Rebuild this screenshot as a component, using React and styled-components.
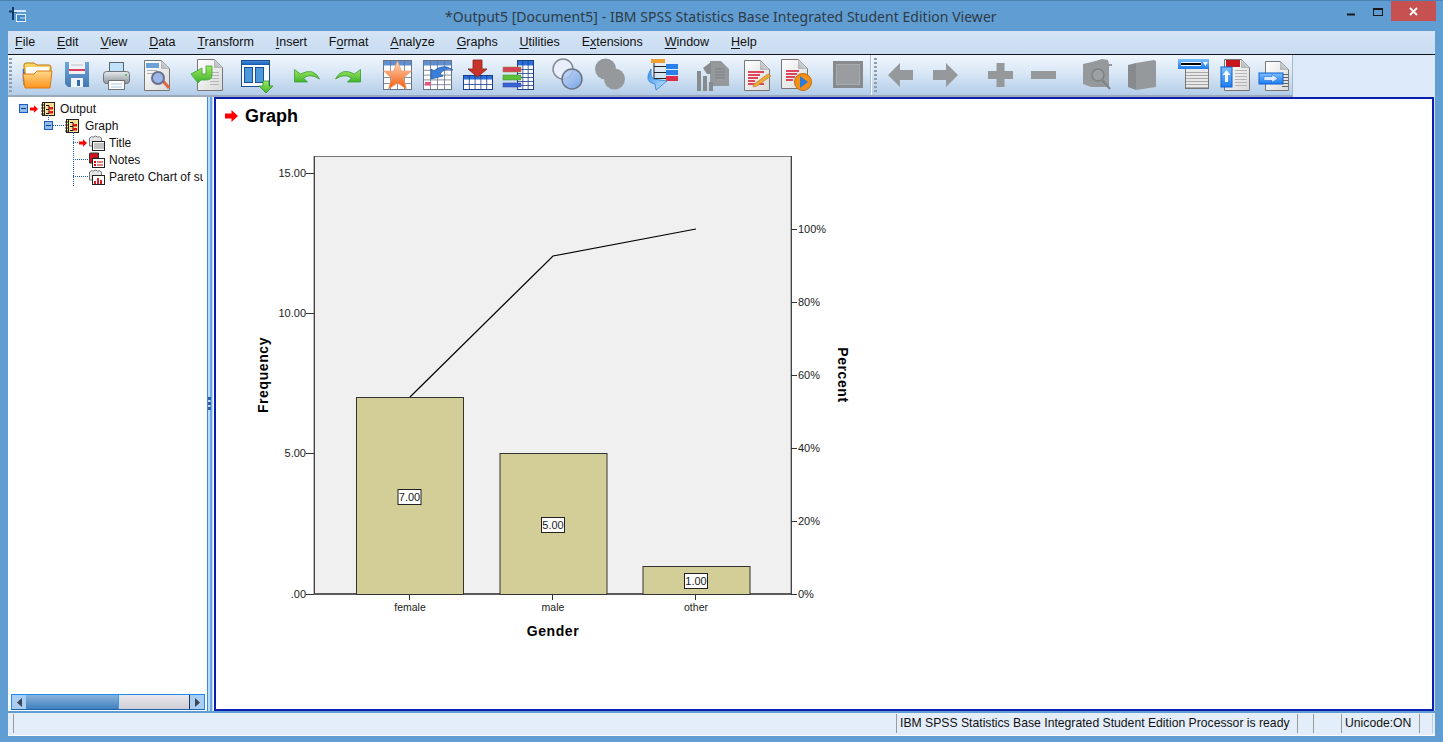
import React from "react";
import styled, { createGlobalStyle } from "styled-components";

const GlobalStyle = createGlobalStyle`
  html, body { margin: 0; padding: 0; overflow: hidden; }
  body { font-family: "Liberation Sans", Arial, sans-serif; }
`;

const Win = styled.div`
  width: 1443px;
  height: 742px;
  box-sizing: border-box;
  background: #5f9dd2;
  border-top: 1px solid #4a82b2;
  display: flex;
  flex-direction: column;
  position: relative;
`;

const TitleBar = styled.div`
  height: 30px;
  flex: none;
  display: flex;
  align-items: center;
  padding-left: 9px;
  position: relative;
`;

const Title = styled.div`
  position: absolute;
  left: 445px;
  top: 6px;
  font-family: "Noto Sans", "Liberation Sans", sans-serif;
  font-size: 14px;
  letter-spacing: 0.035px;
  line-height: 19px;
  color: #2f3b46;
  white-space: nowrap;
`;

const WinControls = styled.div`
  position: absolute;
  right: 7px;
  top: 0;
  height: 20px;
  display: flex;
  align-items: flex-start;
`;

const CtlButton = styled.div`
  width: ${(p) => p.$w}px;
  height: 20px;
  display: flex;
  align-items: center;
  justify-content: center;
  padding-top: ${(p) => p.$drop || 0}px;
  box-sizing: border-box;
  background: ${(p) => (p.$close ? "#c75050" : "transparent")};
`;

const Body = styled.div`
  flex: 1;
  display: flex;
  flex-direction: column;
  margin: 0 8px;
  padding-bottom: 6px;
  min-height: 0;
`;

const MenuBar = styled.div`
  height: 24px;
  flex: none;
  display: flex;
  align-items: center;
  gap: 21.85px;
  padding: 0 0 1px 7px;
  box-sizing: border-box;
  background: linear-gradient(#d5e4f6, #c9dcf1);
  border-bottom: 1px solid #10151a;
  font-size: 12.5px;
  color: #111;
`;

const MenuItem = styled.span`
  u { text-underline-offset: 2px; }
`;

const ToolRow = styled.div`
  height: 42px;
  flex: none;
  display: flex;
  background: #dce9f8;
`;

const ToolBar = styled.div`
  width: 1285px;
  height: 42px;
  box-sizing: border-box;
  display: flex;
  align-items: center;
  position: relative;
  background: linear-gradient(#f0f6fd, #d9e7f6 45%, #b3cde8);
  border-bottom: 2px solid #9aaaba;
  border-right: 1px solid #a8b8c8;
`;

const Grip = styled.div`
  width: 3px;
  height: 34px;
  flex: none;
  margin-left: ${(p) => p.$left}px;
  background: repeating-linear-gradient(#8f9fb0 0 2px, transparent 2px 4px);
`;

const Divider = styled.div`
  width: 1px;
  height: 40px;
  flex: none;
  margin-left: 8px;
  background: #f4f8fc;
  box-shadow: -1px 0 0 #aebfd0;
`;

const Tool = styled.svg`
  flex: none;
  margin-left: ${(p) => p.$gap}px;
  overflow: visible;
`;

const Panes = styled.div`
  flex: 1;
  display: flex;
  min-height: 0;
  background: #cfe0f3;
`;

const TreePane = styled.div`
  width: 199px;
  flex: none;
  box-sizing: border-box;
  background: #fff;
  display: flex;
  flex-direction: column;
  padding-top: 3px;
  position: relative;
`;

const TreeBody = styled.div`
  flex: 1;
  width: 195px;
  overflow: hidden;
`;

const TreeRow = styled.div`
  height: 17px;
  display: flex;
  align-items: center;
  padding-left: ${(p) => p.$indent}px;
  font-size: 12px;
  color: #111;
  white-space: nowrap;
  position: relative;
`;

const Link = styled.i`
  position: absolute;
  left: ${(p) => p.$x}px;
  top: ${(p) => p.$y}px;
  width: ${(p) => p.$w || 0}px;
  height: ${(p) => p.$h || 0}px;
  border-top: ${(p) => (p.$w ? "1px dotted #1f5fc0" : "none")};
  border-left: ${(p) => (p.$h ? "1px dotted #1f5fc0" : "none")};
`;

const NodeIcon = styled.svg`
  flex: none;
  margin-left: ${(p) => p.$gap || 0}px;
`;

const NodeLabel = styled.span`
  margin-left: ${(p) => p.$gap}px;
`;

const HScroll = styled.div`
  height: 16px;
  flex: none;
  margin: 0 2px 1px 3px;
  display: flex;
  box-sizing: border-box;
  border: 1px solid #1f8cf0;
  border-bottom-color: #1e63a8;
`;

const ScrollBtn = styled.div`
  width: 14px;
  flex: none;
  background: #a9cdf3;
  display: flex;
  align-items: center;
  justify-content: center;
`;

const ScrollThumb = styled.div`
  width: 92px;
  flex: none;
  background: linear-gradient(#8ab4db, #3f7fbd);
  border-right: 1px solid #3a9cf5;
`;

const ScrollTrack = styled.div`
  flex: 1;
  background: linear-gradient(#e9e7ec, #cfcdd6);
  border-right: 1px solid #20364f;
`;

const Splitter = styled.div`
  width: 7px;
  flex: none;
  background: linear-gradient(90deg, #3d8ad8 0 1px, #bcdcf8 1px 3px, #6aa8e4 3px 5px, #bcdcf8 5px 6px, #fff 6px);
  display: flex;
  flex-direction: column;
  align-items: center;
  justify-content: center;
  gap: 2px;
  padding-bottom: 1px;
  i {
    width: 3px;
    height: 3px;
    background: #2f5ea8;
    margin-right: 2px;
  }
`;

const Viewer = styled.div`
  flex: 1;
  background: #fff;
  border: 2px solid #0a1fb0;
  min-width: 0;
  overflow: hidden;
  margin-right: 1px;
`;

const GraphHead = styled.div`
  display: flex;
  align-items: center;
  gap: 7px;
  height: 22px;
  margin: 6px 0 0 9px;
  font-size: 18px;
  font-weight: 700;
  color: #000;
`;

const ChartSvg = styled.svg`
  display: block;
  margin: 13px 0 0 14px;
  font-family: "Liberation Sans", Arial, sans-serif;
`;

const StatusBar = styled.div`
  height: 23px;
  flex: none;
  margin-top: 2px;
  box-sizing: border-box;
  display: flex;
  padding: 1px 2px 2px 5px;
  background: #e4eefa;
  border-bottom: 1px solid #fff;
  font-size: 12.2px;
  color: #111;
`;

const StatusCell = styled.div`
  width: ${(p) => p.$w}px;
  flex: ${(p) => (p.$grow ? 1 : "none")};
  box-sizing: border-box;
  border-left: 1px solid #9c9c9c;
  padding-left: 3px;
  line-height: 19px;
  white-space: nowrap;
  overflow: hidden;
  &:last-child {
    border-right: 1px solid #c4ccd6;
  }
`;

const Label = styled.text`
  font-size: ${(p) => p.$size || 11}px;
  font-weight: ${(p) => (p.$bold ? 700 : 400)};
  letter-spacing: ${(p) => (p.$bold ? 0.6 : 0)}px;
  fill: ${(p) => (p.$bold ? "#000" : "#1c1c1c")};
`;

function Defs() {
  return (
    <svg width="0" height="0" style={{ position: "absolute" }}>
      <defs>
        <linearGradient id="gOrange" x1="0" y1="0" x2="0" y2="1">
          <stop offset="0" stopColor="#ffd98a" />
          <stop offset="1" stopColor="#fb9420" />
        </linearGradient>
        <linearGradient id="gYellow" x1="0" y1="0" x2="0" y2="1">
          <stop offset="0" stopColor="#ffd868" />
          <stop offset="1" stopColor="#eda52a" />
        </linearGradient>
        <linearGradient id="gFloppy" x1="0" y1="0" x2="0" y2="1">
          <stop offset="0" stopColor="#6ea6db" />
          <stop offset="1" stopColor="#4479b0" />
        </linearGradient>
        <linearGradient id="gPage" x1="0" y1="0" x2="1" y2="1">
          <stop offset="0" stopColor="#ffffff" />
          <stop offset="1" stopColor="#d9d9d9" />
        </linearGradient>
        <linearGradient id="gFold" x1="0" y1="1" x2="1" y2="0">
          <stop offset="0" stopColor="#aeb2b6" />
          <stop offset="1" stopColor="#f4f4f4" />
        </linearGradient>
        <linearGradient id="gGrey" x1="0" y1="0" x2="0" y2="1">
          <stop offset="0" stopColor="#e8ebee" />
          <stop offset="1" stopColor="#8d9398" />
        </linearGradient>
        <linearGradient id="gGreen" x1="0" y1="0" x2="0" y2="1">
          <stop offset="0" stopColor="#9fe85c" />
          <stop offset="1" stopColor="#3fb52c" />
        </linearGradient>
        <linearGradient id="gStar" x1="0" y1="0" x2="0" y2="1">
          <stop offset="0" stopColor="#ffd9bd" />
          <stop offset="1" stopColor="#f55a0c" />
        </linearGradient>
        <linearGradient id="gHead" x1="0" y1="0" x2="0" y2="1">
          <stop offset="0" stopColor="#3f8ee0" />
          <stop offset="1" stopColor="#1458ac" />
        </linearGradient>
        <linearGradient id="gVenn" x1="0" y1="0" x2="1" y2="1">
          <stop offset="0" stopColor="#c5d8f6" />
          <stop offset="1" stopColor="#6b9be6" />
        </linearGradient>
        <linearGradient id="gBlueBtn" x1="0" y1="0" x2="0" y2="1">
          <stop offset="0" stopColor="#7cc0ff" />
          <stop offset="1" stopColor="#1d7cf0" />
        </linearGradient>
        <linearGradient id="gSwirl" x1="0" y1="0" x2="1" y2="1">
          <stop offset="0" stopColor="#2f90f0" />
          <stop offset="1" stopColor="#cfe6fb" />
        </linearGradient>
      </defs>
    </svg>
  );
}

// little table used by the three data editor buttons
function Grid({ x, y, w, h, cols, rows, head = 5, line = "#555d7a", fill = "#fff", top = "#5f8fd0" }) {
  const cells = [];
  for (let i = 1; i < cols; i++) {
    const cx = x + (w * i) / cols;
    cells.push(<line key={"c" + i} x1={cx} y1={y} x2={cx} y2={y + h} stroke={line} strokeWidth="0.8" />);
  }
  for (let i = 1; i < rows; i++) {
    const cy = y + head + ((h - head) * i) / rows;
    cells.push(<line key={"r" + i} x1={x} y1={cy} x2={x + w} y2={cy} stroke={line} strokeWidth="0.8" />);
  }
  return (
    <g>
      <rect x={x} y={y} width={w} height={h} fill={fill} />
      <rect x={x} y={y} width={w} height={head} fill={top} />
      {cells}
      <rect x={x} y={y} width={w} height={h} fill="none" stroke={line} />
    </g>
  );
}

const PageLines = ({ x, y, w, n, color = "#8a8a8a", step = 3 }) => (
  <g stroke={color}>
    {Array.from({ length: n }, (_, i) => (
      <line key={i} x1={x} x2={x + w} y1={y + i * step + 0.5} y2={y + i * step + 0.5} />
    ))}
  </g>
);

// sheet with a folded top right corner
const Sheet = ({ x, y, w, h, fold = 8 }) => (
  <g>
    <path
      d={`M${x + 0.5} ${y + 0.5}h${w - fold}l${fold} ${fold}v${h - fold}h-${w}z`}
      fill="url(#gPage)"
      stroke="#777"
    />
    <path d={`M${x + w - fold + 0.5} ${y + 0.5}v${fold}h${fold}z`} fill="url(#gFold)" stroke="#9a9a9a" strokeWidth="0.5" />
  </g>
);

const GREY = "#96999c";
const GREY_DARK = "#888b8e";

const TOOLS_LEFT = [
  {
    w: 32, gap: 9,
    draw: (
      <>
        <path d="M3 27V7q0-2 2-2h8l3 2h12q2 0 2 2v6H3z" fill="url(#gYellow)" stroke="#b67b14" />
        <rect x="5" y="9" width="23" height="7" fill="#fff" />
        <path d="M2.500 11v12" stroke="#3a6fd2" strokeWidth="1.500" />
        <path d="M2 16h11l3-3h15l-2 17H4z" fill="url(#gOrange)" stroke="#d97a12" />
      </>
    ),
  },
  {
    w: 26, gap: 11,
    draw: (
      <>
        <path d="M1 4h24v25H4l-3-3z" fill="url(#gFloppy)" />
        <rect x="5" y="4" width="16" height="12" fill="#f0f2f5" />
        <path d="M7 7h12" stroke="#b9c2cc" />
        <rect x="5" y="11" width="16" height="2" fill="#dd3f5f" />
        <rect x="7" y="20" width="12" height="9" fill="#f0f4f8" />
        <rect x="13" y="22" width="3" height="6" fill="#2f6ca8" />
      </>
    ),
  },
  {
    w: 27, gap: 13,
    draw: (
      <>
        <rect x="6.500" y="4.500" width="14" height="10" fill="#bfe2fa" stroke="#5c6670" />
        <rect x="0.500" y="13.500" width="26" height="12" rx="3" fill="url(#gGrey)" stroke="#6d7378" />
        <circle cx="23" cy="17" r="1" fill="#3fb54a" />
        <rect x="5.500" y="22.500" width="16" height="9" fill="#fff" stroke="#6d7378" />
        <path d="M8 26h11M8 29h11" stroke="#a8c8e8" />
      </>
    ),
  },
  {
    w: 28, gap: 13,
    draw: (
      <>
        <Sheet x={1} y={2} w={25} h={30} />
        <rect x="3" y="5" width="13" height="5" fill="#6ea0d8" />
        <PageLines x={4} y={12} w={10} n={2} color="#b0b0b0" />
        <path d="M20 23l6 7" stroke="#e2653c" strokeWidth="3" />
        <circle cx="15" cy="20" r="6" fill="#9db6ea" stroke="#68708a" strokeWidth="2" />
      </>
    ),
  },
  {
    w: 32, gap: 20,
    draw: (
      <>
        <Sheet x={6} y={1} w={25} h={31} />
        <PageLines x={19} y={14} w={9} n={5} color="#b5b5b5" />
        <path d="M0 16l11-6 0 6h4V8h6v9q0 5-6 5h-5l-3 3z" fill="url(#gGreen)" stroke="#3c9e3c" strokeWidth="0.800" />
      </>
    ),
  },
  {
    w: 32, gap: 18,
    draw: (
      <>
        <rect x="0.500" y="2.500" width="28" height="26" fill="#f8fbff" stroke="#1f4e8c" />
        <rect x="1" y="3" width="27" height="4" fill="url(#gHead)" />
        <rect x="3.500" y="9.500" width="8" height="15" fill="#4b9ade" stroke="#1f4e8c" />
        <rect x="14.500" y="9.500" width="8" height="15" fill="#4b9ade" stroke="#1f4e8c" />
        <path d="M22 23h6v5h4l-7 7-7-7h4z" fill="url(#gGreen)" stroke="#2f8f2f" strokeWidth="0.800" />
      </>
    ),
  },
  {
    w: 26, gap: 21,
    draw: (
      <path d="M0.500 11.500v12.500h13l-4-4q7-5 16 1-6-12-19-5z" fill="url(#gGreen)" stroke="#3a9a30" strokeWidth="0.800" />
    ),
  },
  {
    w: 27, gap: 14,
    draw: (
      <path d="M26.500 11.500v12.500h-13l4-4q-7-5-16 1 6-12 19-5z" fill="url(#gGreen)" stroke="#3a9a30" strokeWidth="0.800" />
    ),
  },
  {
    w: 29, gap: 22,
    draw: (
      <>
        <Grid x={0.5} y={2.5} w={28} h={29} cols={4} rows={4} line="#6a7288" />
        <path d="M14.500 3l4 10h10l-8 7 3 11-9-6-9 6 3-11-8-7h10z" fill="url(#gStar)" stroke="#e8a070" strokeWidth="0.700" />
      </>
    ),
  },
  {
    w: 31, gap: 11,
    draw: (
      <>
        <Grid x={0.5} y={2.5} w={28} h={29} cols={4} rows={5} line="#6a7288" />
        <rect x="2" y="24" width="6" height="3.500" fill="#e8557a" />
        <path d="M8 21v-10l3 2q5-5 13-4l6 3q-8-3-13 4l3 2z" fill="#3a7fd8" stroke="#2560b0" strokeWidth="0.800" />
      </>
    ),
  },
  {
    w: 30, gap: 9,
    draw: (
      <>
        <Grid x={0.5} y={17.5} w={29} h={14} cols={5} rows={2} head={4} line="#1a3e8a" top="#2a70d8" />
        <path d="M10 2h9v9h5l-9.500 8L5 11h5z" fill="#c8342a" stroke="#8a1f1a" strokeWidth="0.800" />
      </>
    ),
  },
  {
    w: 32, gap: 9,
    draw: (
      <>
        <Grid x={15.5} y={2.5} w={16} h={29} cols={3} rows={6} head={5} line="#1a3e8a" top="#2a70d8" />
        <rect x="1" y="9" width="18" height="5" fill="#d8405a" stroke="#88902a" strokeWidth="0.500" />
        <rect x="1" y="17" width="18" height="5" fill="#5cc03a" stroke="#3a8a2a" strokeWidth="0.500" />
        <rect x="1" y="25" width="18" height="4" fill="#3a62d8" stroke="#28409a" strokeWidth="0.500" />
      </>
    ),
  },
  {
    w: 31, gap: 18,
    draw: (
      <>
        <circle cx="11" cy="11" r="10" fill="#e8eefb" stroke="#868a92" strokeWidth="1.500" />
        <circle cx="20" cy="21" r="10" fill="url(#gVenn)" fillOpacity="0.850" stroke="#6d7488" strokeWidth="1.500" />
      </>
    ),
  },
  {
    w: 30, gap: 12,
    draw: (
      <>
        <circle cx="10.500" cy="11" r="10.500" fill={GREY} />
        <circle cx="19.500" cy="21" r="10.500" fill={GREY} />
      </>
    ),
  },
  {
    w: 33, gap: 21,
    draw: (
      <>
        <rect x="5" y="1" width="14" height="4" fill="#f0a030" />
        <path d="M8 5v16M8 8.500h12M8 14.500h12M8 20.500h12" stroke="#222" />
        <rect x="20" y="6" width="12" height="5" fill="#2a80e8" />
        <rect x="20" y="12" width="12" height="5" fill="#2a80e8" />
        <rect x="20" y="18" width="12" height="5" fill="#d8304a" />
        <path d="M5 11Q-3 24 9 26l1 6 11-9-14-2q-3-3-2-10z" fill="url(#gSwirl)" stroke="#2a80d8" strokeWidth="0.800" />
      </>
    ),
  },
  {
    w: 32, gap: 18,
    draw: (
      <>
        <path d="M13 3h11l8 8v17H13z" fill={GREY} />
        <path d="M18 11h10M18 14h10M18 17h10M18 20h10" stroke="#7e8184" />
        <path d="M0 13h4v20H0zM6 10l8-6v12h-4zM6 18h4v15H6zM12 24h4v9h-4z" fill={GREY_DARK} />
      </>
    ),
  },
  {
    w: 28, gap: 14,
    draw: (
      <>
        <Sheet x={1} y={2} w={25} h={30} fold={9} />
        <g stroke="#d8102e" strokeWidth="1.500">
          <path d="M5 14h16M5 17h12M5 20h10M5 23h7M5 26h16" />
        </g>
        <path d="M11 26l14-10 3 2-14 10-4 1z" fill="#f0a838" stroke="#b87818" strokeWidth="0.600" />
      </>
    ),
  },
  {
    w: 32, gap: 9,
    draw: (
      <>
        <Sheet x={1} y={1} w={26} h={29} fold={9} />
        <g stroke="#d8102e" strokeWidth="1.500">
          <path d="M6 13h13M6 16h11M6 19h9M6 22h7" />
        </g>
        <circle cx="23" cy="24" r="8.500" fill="#f29018" stroke="#c26a0c" />
        <path d="M20 18l8 6-8 6z" fill="#2a7cd8" />
      </>
    ),
  },
  {
    w: 30, gap: 21,
    draw: (
      <>
        <rect x="0" y="3" width="30" height="27" fill={GREY_DARK} />
        <rect x="3.500" y="6.500" width="23" height="20" fill="#9a9d9f" stroke="#a8abad" />
      </>
    ),
  },
];

const GreyArrow = ({ d }) => <path d={d} fill={GREY} />;

const TOOLS_RIGHT = [
  { w: 25, gap: 11, draw: <GreyArrow d="M0 17L12 5v7h13v10H12v7z" /> },
  { w: 25, gap: 20, draw: <GreyArrow d="M25 17L13 5v7H0v10h13v7z" /> },
  { w: 25, gap: 30, draw: <GreyArrow d="M8.500 5h8v8H25v8h-8.500v8h-8v-8H0v-8h8.500z" /> },
  { w: 25, gap: 18, draw: <rect x="0" y="13" width="25" height="8" fill={GREY} /> },
  {
    w: 31, gap: 27,
    draw: (
      <>
        <path d="M0 6l9-2 10-3 6 1 1 4h3v2h-3v21H8l-8-3z" fill={GREY} />
        <circle cx="15" cy="17" r="6" fill="#9ea1a4" stroke="#7e8184" strokeWidth="1.500" />
        <path d="M19 22l8 9" stroke="#808386" strokeWidth="2" />
      </>
    ),
  },
  {
    w: 28, gap: 14,
    draw: (
      <>
        <path d="M0 7l8-2v27l-8-3z" fill={GREY_DARK} />
        <path d="M8 5l18-3 2 1v26L8 32z" fill={GREY} />
      </>
    ),
  },
  {
    w: 31, gap: 22,
    draw: (
      <>
        <rect x="7.500" y="10.500" width="23" height="20" fill="#e8e8e8" stroke="#777" />
        <PageLines x={8} y={14} w={22} n={6} color="#a8a8a8" />
        <rect x="0" y="1" width="31" height="10" fill="url(#gBlueBtn)" />
        <rect x="3" y="4" width="20" height="4" fill="#f4f8ff" />
        <rect x="3" y="5" width="20" height="2" fill="#000" />
        <path d="M25 4h5l-2.500 4z" fill="#fff" />
      </>
    ),
  },
  {
    w: 29, gap: 12,
    draw: (
      <>
        <Sheet x={3} y={1} w={25} h={31} />
        <rect x="5" y="2" width="14" height="7" fill="#c8141e" />
        <PageLines x={14} y={12} w={12} n={6} color="#b5b5b5" />
        <rect x="0" y="9" width="11" height="20" fill="url(#gBlueBtn)" stroke="#1060d0" />
        <path d="M5.500 12l4 5h-2.500v7h-3v-7H1.500z" fill="#f4f8ff" />
      </>
    ),
  },
  {
    w: 30, gap: 9,
    draw: (
      <>
        <Sheet x={6} y={3} w={23} h={29} />
        <PageLines x={23} y={16} w={6} n={5} color="#666" />
        <rect x="0" y="15" width="24" height="11" fill="url(#gBlueBtn)" stroke="#1060d0" />
        <path d="M5 18.500h8v-2l6 4-6 4v-2H5z" fill="#dceaff" stroke="#1060d0" strokeWidth="0.500" />
      </>
    ),
  },
];

const ToolIcon = ({ w, gap, draw }) => (
  <Tool width={w} height="34" viewBox={`0 0 ${w} 34`} $gap={gap}>
    {draw}
  </Tool>
);

const MENUS = [
  ["", "F", "ile"], ["", "E", "dit"], ["", "V", "iew"], ["", "D", "ata"], ["", "T", "ransform"],
  ["", "I", "nsert"], ["F", "o", "rmat"], ["", "A", "nalyze"], ["", "G", "raphs"], ["", "U", "tilities"],
  ["E", "x", "tensions"], ["", "W", "indow"], ["", "H", "elp"],
];

const RedArrow = ({ w = 8, h = 8 }) => (
  <svg width={w} height={h} viewBox="0 0 13 12" style={{ flex: "none" }}>
    <path d="M0 3.500h6.500V0L13 6l-6.500 6V8.500H0z" fill="#f00" />
  </svg>
);

const Expander = ({ gap }) => (
  <NodeIcon width="9" height="9" viewBox="0 0 9 9" $gap={gap}>
    <rect x="0.500" y="0.500" width="8" height="8" fill="#8fbcec" stroke="#1e5ac0" />
    <path d="M2 4.500h5" stroke="#123f80" />
  </NodeIcon>
);

const BookIcon = ({ gap }) => (
  <NodeIcon width="14" height="16" viewBox="0 0 14 16" $gap={gap}>
    <rect x="1.500" y="1.500" width="12" height="13" fill="#fbe08f" stroke="#222" />
    <path d="M3.500 2v12" stroke="#222" />
    <path d="M0 4h3M0 7h3M0 10h3M0 13h3" stroke="#222" />
    <path d="M5 4.500h3v8H5M5 8.500h3" fill="none" stroke="#111" />
    <rect x="8" y="6" width="4" height="2.500" fill="#e8101c" />
    <rect x="8" y="10" width="4" height="2.500" fill="#e8101c" />
  </NodeIcon>
);

// open book behind a small sheet: the leaves of the outline tree
const PageStack = ({ children, gap, dark }) => (
  <NodeIcon width="17" height="16" viewBox="0 0 17 16" $gap={gap}>
    {dark ? (
      <path d="M1.500 11V2q0-1 1-1h8v5H5v5z" fill="#d01424" stroke="#333" />
    ) : (
      <path d="M1.500 11V3q2-2 4-1 2-2 4 0 2-1 4 1v4H5v4z" fill="#e4e4e4" stroke="#777" />
    )}
    <rect x="4.500" y="6.500" width="12" height="9" fill="#fff" stroke="#222" />
    {children}
  </NodeIcon>
);

function App() {
  return (
    <>
      <GlobalStyle />
      <Defs />
      <Win>
        <TitleBar>
          <svg width="18" height="18" viewBox="0 0 18 18">
            <path d="M4 0v13M0 4.500h8" stroke="#123a6a" strokeWidth="2" />
            <path d="M5 3h12v2H5z" fill="#d8e8f8" />
            <rect x="7.500" y="7.500" width="9" height="7" fill="#3f88c8" stroke="#e4f0fb" />
            <path d="M11 11h5" stroke="#cfe4f8" />
          </svg>
          <Title>*Output5 [Document5] - IBM SPSS Statistics Base Integrated Student Edition Viewer</Title>
          <WinControls>
            <CtlButton $w={26} $drop={6}>
              <svg width="8" height="3"><rect width="8" height="2" y="0.500" fill="#1a1a1a" /></svg>
            </CtlButton>
            <CtlButton $w={27} $drop={2}>
              <svg width="10" height="8"><rect x="0.500" y="0.500" width="9" height="7" fill="none" stroke="#1a1a1a" /><rect width="10" height="2" fill="#1a1a1a" /></svg>
            </CtlButton>
            <CtlButton $w={45} $close>
              <svg width="9" height="9" viewBox="0 0 9 9"><path d="M1 1l7 7M8 1l-7 7" stroke="#fff" strokeWidth="1.800" /></svg>
            </CtlButton>
          </WinControls>
        </TitleBar>
        <Body>
          <MenuBar>
            {MENUS.map(([pre, key, rest]) => (
              <MenuItem key={key + rest}>
                {pre}<u>{key}</u>{rest}
              </MenuItem>
            ))}
          </MenuBar>
          <ToolRow>
            <ToolBar>
              <Grip $left={1} />
              {TOOLS_LEFT.map((t, i) => (
                <ToolIcon key={i} {...t} />
              ))}
              <Divider />
              <Grip $left={2} />
              {TOOLS_RIGHT.map((t, i) => (
                <ToolIcon key={i} {...t} />
              ))}
            </ToolBar>
          </ToolRow>
          <Panes>
            <TreePane>
              <TreeBody>
                <TreeRow $indent={11}>
                  <Expander />
                  <NodeLabel $gap={2} />
                  <RedArrow />
                  <BookIcon gap={3} />
                  <NodeLabel $gap={5}>Output</NodeLabel>
                </TreeRow>
                <TreeRow $indent={36}>
                  <Link $x={40} $y={-2} $h={5} />
                  <Expander />
                  <Link $x={45} $y={8} $w={11} />
                  <BookIcon gap={12} />
                  <NodeLabel $gap={6}>Graph</NodeLabel>
                </TreeRow>
                <TreeRow $indent={71}>
                  <Link $x={65} $y={-2} $h={54} />
                  <Link $x={65} $y={8} $w={5} />
                  <RedArrow />
                  <PageStack gap={1}>
                    <path d="M6 9h10M6 11h10M6 13h10" stroke="#555" strokeWidth="0.700" />
                  </PageStack>
                  <NodeLabel $gap={4}>Title</NodeLabel>
                </TreeRow>
                <TreeRow $indent={65}>
                  <Link $x={65} $y={8} $w={15} />
                  <PageStack gap={15} dark>
                    <rect x="6" y="9" width="2" height="2" fill="#e00" />
                    <rect x="6" y="12" width="2" height="2" fill="#e00" />
                    <path d="M9 10h6M9 13h6" stroke="#c00" />
                  </PageStack>
                  <NodeLabel $gap={4}>Notes</NodeLabel>
                </TreeRow>
                <TreeRow $indent={65}>
                  <Link $x={65} $y={8} $w={15} />
                  <PageStack gap={15}>
                    <path d="M6 15v-3h2v3zM9 15V9h2v6zM12 15v-4h2v4z" fill="#d8202c" />
                  </PageStack>
                  <NodeLabel $gap={4}>Pareto Chart of summary</NodeLabel>
                </TreeRow>
              </TreeBody>
              <HScroll>
                <ScrollBtn>
                  <svg width="5" height="9" viewBox="0 0 5 9"><path d="M5 0v9L0 4.500z" fill="#3c4650" /></svg>
                </ScrollBtn>
                <ScrollThumb />
                <ScrollTrack />
                <ScrollBtn>
                  <svg width="5" height="9" viewBox="0 0 5 9"><path d="M0 0v9l5-4.500z" fill="#3c4650" /></svg>
                </ScrollBtn>
              </HScroll>
            </TreePane>
            <Splitter>
              <i /><i /><i />
            </Splitter>
            <Viewer>
              <GraphHead>
                <RedArrow w={13} h={12} />
                Graph
              </GraphHead>
              <ChartSvg width="640" height="520" viewBox="230 140 640 520">
                <rect x="314" y="156.500" width="477" height="437.500" fill="#f0f0f0" stroke="#777" />
                <path d="M314 594h477" stroke="#000" />
                <path d="M314.500 156v438M791.500 156v438" stroke="#444" />
                {[["15.00", 173], ["10.00", 313], ["5.00", 453], [".00", 594]].map(([t, y]) => (
                  <g key={t}>
                    <path d={`M306 ${y + 0.5}h8`} stroke="#333" />
                    <Label x="306" y={y + 4} textAnchor="end">{t}</Label>
                  </g>
                ))}
                {[["100%", 229], ["80%", 302], ["60%", 375], ["40%", 448], ["20%", 521], ["0%", 594]].map(([t, y]) => (
                  <g key={t}>
                    <path d={`M791 ${y + 0.5}h6`} stroke="#333" />
                    <Label x="798" y={y + 4}>{t}</Label>
                  </g>
                ))}
                {[[356, 397, 107], [499.5, 453, 107], [642.5, 566, 107]].map(([x, y, w]) => (
                  <rect key={x} x={x + 0.5} y={y + 0.5} width={w} height={594 - y} fill="#d3ce97" stroke="#333" />
                ))}
                <polyline points="410,397 553,256 696,229" fill="none" stroke="#000" strokeWidth="1.200" />
                {[["female", 410], ["male", 553], ["other", 696]].map(([t, x]) => (
                  <g key={t}>
                    <path d={`M${x - 0.5} 594v6`} stroke="#333" />
                    <Label x={x} y="611" textAnchor="middle" $size={10.5}>{t}</Label>
                  </g>
                ))}
                {[["7.00", 409.5, 497], ["5.00", 553, 525], ["1.00", 696, 581]].map(([t, x, y]) => (
                  <g key={t}>
                    <rect x={x - 11.5} y={y - 7.5} width="23" height="15" fill="#fff" stroke="#222" />
                    <Label x={x} y={y + 4} textAnchor="middle">{t}</Label>
                  </g>
                ))}
                <Label x="553" y="636" textAnchor="middle" $size={14} $bold>Gender</Label>
                <Label transform="translate(268 375) rotate(-90)" textAnchor="middle" $size={14} $bold>Frequency</Label>
                <Label transform="translate(838 375) rotate(90)" textAnchor="middle" $size={14} $bold>Percent</Label>
              </ChartSvg>
            </Viewer>
          </Panes>
          <StatusBar>
            <StatusCell $grow />
            <StatusCell $w={401}>IBM SPSS Statistics Base Integrated Student Edition Processor is ready</StatusCell>
            <StatusCell $w={16} />
            <StatusCell $w={28} />
            <StatusCell $w={78}>Unicode:ON</StatusCell>
            <StatusCell $w={14} />
          </StatusBar>
        </Body>
      </Win>
    </>
  );
}

export default App;
